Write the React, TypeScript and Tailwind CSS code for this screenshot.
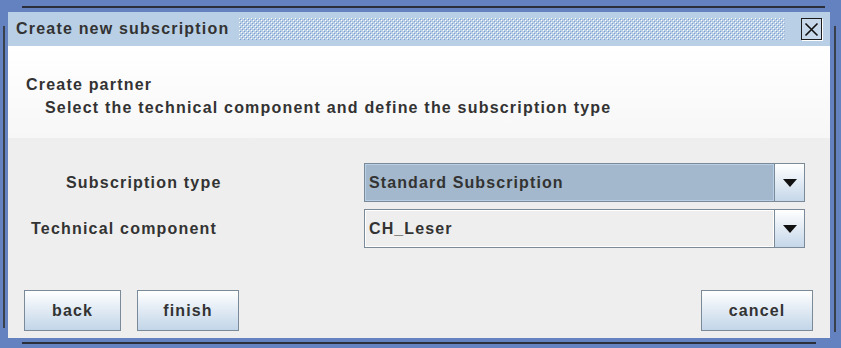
import React from "react";

function Bumps() {
  return (
    <svg className="h-[22px] flex-1" preserveAspectRatio="none">
      <defs>
        <pattern id="bumps" width="4" height="4" patternUnits="userSpaceOnUse">
          <rect x="0" y="0" width="1" height="1" fill="#ffffff" />
          <rect x="1" y="1" width="1" height="1" fill="#7f9fd4" />
          <rect x="2" y="2" width="1" height="1" fill="#ffffff" />
          <rect x="3" y="3" width="1" height="1" fill="#7f9fd4" />
        </pattern>
      </defs>
      <rect width="100%" height="100%" fill="url(#bumps)" />
    </svg>
  );
}

function Combo({ value, selected }: { value: string; selected?: boolean }) {
  return (
    <div className="flex h-[39px] w-[441px] border border-[#7a8a99]">
      <div
        className={`flex flex-1 items-center pl-[3px] text-[16px] font-bold tracking-[1.1px] text-[#333333] ${
          selected ? "bg-[#a3b8cc] border border-[#b8cfe5]" : "bg-[#eeeeee] border border-white"
        }`}
      >
        {value}
      </div>
      <div className="flex w-[30px] items-center justify-center border-l border-[#7a8a99] bg-gradient-to-b from-white to-[#c5d7e9]">
        <svg width="14" height="8" viewBox="0 0 14 8">
          <path d="M0 0 H14 L7 8 Z" fill="#111111" />
        </svg>
      </div>
    </div>
  );
}

function Button({ label, width }: { label: string; width: string }) {
  return (
    <button
      className={`${width} h-[41px] border border-[#7a8a99] bg-gradient-to-b from-white to-[#c2d5e8] text-[16px] font-bold tracking-[1.1px] text-[#333333]`}
    >
      {label}
    </button>
  );
}

export default function App() {
  return (
    <div
      className="relative flex h-[348px] w-[841px] flex-col bg-[#6382bf] pb-[10px] pl-[8px] pr-[11px] pt-[12px] tracking-[1.2px]"
      style={{ fontFamily: '"Liberation Sans", Arial, sans-serif' }}
    >
      {/* frame inset lines */}
      <div className="absolute left-[22px] right-[16px] top-[6px] h-[2px] bg-[#2b2f3a]" />
      <div className="absolute left-[3px] top-[26px] bottom-[20px] w-[2px] bg-[#3a3f4c]" />
      <div className="absolute right-[5px] top-[26px] bottom-[16px] w-[2px] bg-[#3a3f4c]" />
      <div className="absolute left-[22px] right-[25px] bottom-[4px] h-[2px] bg-[#2b2f3a]" />

      {/* title bar */}
      <div className="flex h-[34px] items-center gap-[10px] bg-[#b8cfe5] pl-[8px] pr-[8px]">
        <span className="text-[16px] font-bold text-[#333333]">Create new subscription</span>
        <Bumps />
        <div className="ml-[6px] flex h-[22px] w-[21px] items-center justify-center border border-[#1c1c1c] bg-[#c6d8ea] shadow-[1px_1px_0_#ffffff]">
          <svg width="15" height="15" viewBox="0 0 15 15">
            <path d="M1.5 1.5 L13.5 13.5 M13.5 1.5 L1.5 13.5" stroke="#111111" strokeWidth="1.6" />
          </svg>
        </div>
      </div>

      {/* header panel */}
      <div className="flex h-[92px] flex-col bg-gradient-to-b from-white to-[#f7f7f7] pl-[18px] pt-[27px] text-[16px] font-bold leading-[23px] text-[#333333]">
        <div>Create partner</div>
        <div className="pl-[19px]">Select the technical component and define the subscription type</div>
      </div>

      {/* form */}
      <div className="flex flex-1 flex-col bg-[#eeeeee]">
        <div className="flex flex-col gap-[7px] pt-[25px]">
          <div className="flex items-center">
            <div className="w-[356px] pl-[58px] text-[16px] font-bold text-[#333333]">Subscription type</div>
            <Combo value="Standard Subscription" selected />
          </div>
          <div className="flex items-center">
            <div className="w-[356px] pl-[23px] text-[16px] font-bold text-[#333333]">Technical component</div>
            <Combo value="CH_Leser" />
          </div>
        </div>
        <div className="mt-auto flex items-center gap-[16px] pb-[7px] pl-[16px] pr-[17px]">
          <Button label="back" width="w-[97px]" />
          <Button label="finish" width="w-[102px]" />
          <div className="flex-1" />
          <Button label="cancel" width="w-[112px]" />
        </div>
      </div>
    </div>
  );
}
